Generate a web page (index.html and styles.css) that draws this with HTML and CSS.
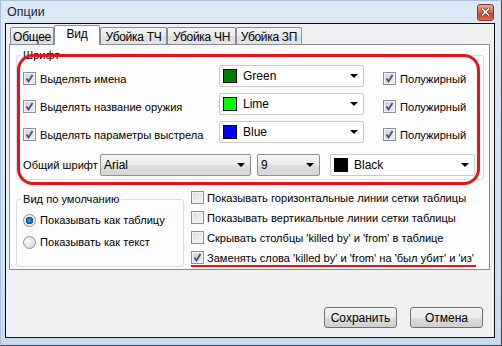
FILE: index.html
```html
<!DOCTYPE html>
<html lang="ru">
<head>
    <meta charset="UTF-8">
    <title>Опции</title>
    <link rel="stylesheet" href="styles.css">
</head>
<body>
    <div class="window">
        <div class="titlebar">
            <span class="title">Опции</span>
            <div class="close-btn">
                <svg width="9" height="8" viewBox="0 0 9 8">
                    <path d="M1.5 1 L7.5 7 M7.5 1 L1.5 7" stroke="#5a2a22" stroke-width="3" stroke-linecap="square"/>
                    <path d="M1.5 1 L7.5 7 M7.5 1 L1.5 7" stroke="#fff" stroke-width="1.6" stroke-linecap="square"/>
                </svg>
            </div>
        </div>

        <div class="client">
            <div class="tabs">
                <div class="tab tab-general">Общее</div>
                <div class="tab tab-view active">Вид</div>
                <div class="tab tab-tch">Убойка ТЧ</div>
                <div class="tab tab-chn">Убойка ЧН</div>
                <div class="tab tab-zp">Убойка ЗП</div>
            </div>

            <div class="tab-panel">
                <fieldset class="group group-font">
                    <legend>Шрифт</legend>
                    <div class="font-grid">
                        <label class="check-row row-main"><span class="check checked"></span>Выделять имена</label>
                        <div class="combo"><span class="swatch" style="background:#008000"></span>Green<span class="arrow"></span></div>
                        <label class="check-row row-bold"><span class="check checked"></span>Полужирный</label>

                        <label class="check-row row-main"><span class="check checked"></span>Выделять название оружия</label>
                        <div class="combo"><span class="swatch" style="background:#00ff00"></span>Lime<span class="arrow"></span></div>
                        <label class="check-row row-bold"><span class="check checked"></span>Полужирный</label>

                        <label class="check-row row-main"><span class="check checked"></span>Выделять параметры выстрела</label>
                        <div class="combo"><span class="swatch" style="background:#0000ff"></span>Blue<span class="arrow"></span></div>
                        <label class="check-row row-bold"><span class="check checked"></span>Полужирный</label>
                    </div>
                    <div class="font-common">
                        <span class="common-label">Общий шрифт</span>
                        <div class="combo combo-list combo-family">Arial<span class="arrow"></span></div>
                        <div class="combo combo-list combo-size">9<span class="arrow"></span></div>
                        <div class="combo combo-color"><span class="swatch" style="background:#000"></span>Black<span class="arrow"></span></div>
                    </div>
                </fieldset>

                <div class="lower">
                    <fieldset class="group group-view">
                        <legend>Вид по умолчанию</legend>
                        <label class="radio-row"><span class="radio selected"></span>Показывать как таблицу</label>
                        <label class="radio-row"><span class="radio"></span>Показывать как текст</label>
                    </fieldset>
                    <div class="grid-options">
                        <label class="check-row"><span class="check"></span>Показывать горизонтальные линии сетки таблицы</label>
                        <label class="check-row"><span class="check"></span>Показывать вертикальные линии сетки таблицы</label>
                        <label class="check-row"><span class="check"></span>Скрывать столбцы 'killed by' и 'from' в таблице</label>
                        <label class="check-row underlined"><span class="check checked"></span>Заменять слова 'killed by' и 'from' на 'был убит' и 'из'</label>
                    </div>
                </div>

                <!-- red marker drawn over the font group -->
                <div class="marker"></div>
            </div>

            <div class="buttons">
                <button class="btn">Сохранить</button>
                <button class="btn">Отмена</button>
            </div>
        </div>
    </div>
</body>
</html>
```

FILE: styles.css
```css
* {
    margin: 0;
    padding: 0;
    box-sizing: border-box;
}

body {
    font-family: 'Liberation Sans', Arial, sans-serif;
    font-size: 11.1px;
    color: #000;
    background: #fff;
    white-space: nowrap;
}

.window {
    width: 502px;
    height: 346px;
    padding: 0 6px 7px 4px;
    border-top: 1px solid #a9c0dc;
    border-left: 1px solid #a9c0dc;
    border-right: 1px solid #3d3d3d;
    border-bottom: 1px solid #3d3d3d;
    background: linear-gradient(#dce9f7, #c8dbf1);
    display: flex;
    flex-direction: column;
}

.titlebar {
    height: 22px;
    display: flex;
    align-items: center;
    padding-left: 2px;
}

.title {
    font-size: 12.5px;
    color: #10233a;
}

.close-btn {
    margin-left: auto;
    margin-right: 1px;
    width: 17px;
    height: 17px;
    border: 1px solid #7a3b30;
    border-radius: 3px;
    background: linear-gradient(#e9a99b, #d4624c 50%, #c2422b 51%, #d86a52);
    display: flex;
    align-items: center;
    justify-content: center;
}

.client {
    height: 315px;
    border: 1px solid #111;
    background: #f0f0f0;
    padding: 1px 4px 0 3px;
    display: flex;
    flex-direction: column;
}

.tabs {
    display: flex;
    align-items: flex-end;
    height: 20px;
    padding-left: 1px;
    margin-bottom: -1px;
    position: relative;
    z-index: 1;
}

.tab {
    height: 17px;
    border: 1px solid #898c95;
    border-bottom: none;
    border-radius: 2px 2px 0 0;
    background: linear-gradient(#f3f3f3, #ebebeb 50%, #dedede 51%, #e3e3e3);
    display: flex;
    align-items: center;
    justify-content: center;
    font-size: 12px;
    letter-spacing: -0.3px;
    padding-top: 1px;
    margin-bottom: 1px;
}

.tab.active {
    height: 20px;
    margin-bottom: 0;
    background: #fcfcfc;
    padding-top: 0;
    padding-bottom: 3px;
}

.tab-general { width: 44px; }
.tab-view { width: 46px; }
.tab-tch { width: 67px; }
.tab-chn { width: 69px; }
.tab-zp { width: 66px; }

.tab-panel {
    position: relative;
    height: 226px;
    border: 1px solid #898c95;
    background: #fcfcfc;
    padding: 0 5px 0 6px;
}

.group {
    border: 1px solid #d5dfe5;
    border-radius: 3px;
    min-width: 0;
}

.group legend {
    line-height: 14px;
    padding: 0 2px;
    margin-left: -2px;
}

.group-font {
    margin-top: 3px;
    padding: 3px 6px 3px 6px;
}

.font-grid {
    display: grid;
    grid-template-columns: 196px 145px 1fr;
    grid-auto-rows: 22px;
    row-gap: 6px;
}

.check-row {
    display: flex;
    align-items: center;
    gap: 4px;
}

.row-main {
    margin-top: 5px;
}

.row-bold {
    margin-top: 5px;
    padding-left: 19px;
}

.check {
    width: 13px;
    height: 13px;
    flex: none;
    border: 1px solid #8e8f8f;
    background: linear-gradient(135deg, #dcdcdc, #f6f6f6);
    box-shadow: inset 0 0 0 1px #f4f4f4;
}

.check.checked {
    background-image: url("data:image/svg+xml,%3Csvg xmlns='http://www.w3.org/2000/svg' width='11' height='11'%3E%3Cpath d='M2.5 5.5 L4.5 8.5 L8.5 2' fill='none' stroke='%233a4d86' stroke-width='1.7'/%3E%3C/svg%3E"), linear-gradient(135deg, #cfcfcf, #eeeeee);
}

.combo {
    height: 22px;
    border: 1px solid #c9c9c9;
    border-radius: 2px;
    background: #fff;
    display: flex;
    align-items: center;
    padding-left: 3px;
    font-size: 12px;
}

.swatch {
    width: 14px;
    height: 14px;
    border: 1px solid #000;
    margin-right: 6px;
}

.arrow {
    margin-left: auto;
    margin-right: 5px;
    width: 0;
    height: 0;
    border-left: 4px solid transparent;
    border-right: 4px solid transparent;
    border-top: 4px solid #000;
}

.combo-list {
    border-color: #8e8e8e;
    background: linear-gradient(#f4f4f4, #ebebeb 50%, #dddddd 51%, #d6d6d6);
}

.font-common {
    display: flex;
    align-items: center;
    margin-top: 11px;
}

.common-label {
    width: 77px;
    flex: none;
}

.combo-family { width: 151px; }
.combo-size { width: 63px; margin-left: 6px; }
.combo-color { width: 145px; margin-left: 10px; }

.lower {
    display: flex;
    margin-top: 11px;
    gap: 7px;
}

.group-view {
    flex: none;
    width: 168px;
    margin-top: 1px;
    padding: 5px 6px 8px 6px;
}

.radio-row {
    height: 18px;
    display: flex;
    align-items: center;
    gap: 4px;
}

.radio-row + .radio-row {
    margin-top: 4px;
}

.radio {
    width: 13px;
    height: 13px;
    border-radius: 50%;
    border: 1px solid #8e8f8f;
    background: radial-gradient(circle at 35% 35%, #fafafa, #d0d0d0);
}

.radio.selected {
    background: radial-gradient(circle at 50% 50%, #4aa6e6 0, #1466b0 2.5px, #0c4d8c 3.5px, #e8e8e8 4px, #f6f6f6);
}

.grid-options {
    display: flex;
    flex-direction: column;
    align-items: flex-start;
    gap: 7px;
}

.grid-options .check-row {
    height: 13px;
    gap: 3px;
}

.grid-options .underlined {
    height: 16px;
    padding-bottom: 1px;
    border-bottom: 2px solid #e4141b;
    padding-right: 2px;
}

.marker {
    position: absolute;
    left: 7px;
    top: 9px;
    width: 463px;
    height: 131px;
    border: 3px solid #e4141b;
    border-radius: 16px;
    pointer-events: none;
}

.buttons {
    display: flex;
    justify-content: flex-end;
    gap: 13px;
    margin-top: 37px;
    padding-right: 7px;
}

.btn {
    width: 73px;
    height: 21px;
    font-family: 'Liberation Sans', Arial, sans-serif;
    font-size: 12px;
    color: #000;
    border: 1px solid #707070;
    border-radius: 3px;
    background: linear-gradient(#f2f2f2, #ebebeb 50%, #dddddd 51%, #cfcfcf);
}
```
